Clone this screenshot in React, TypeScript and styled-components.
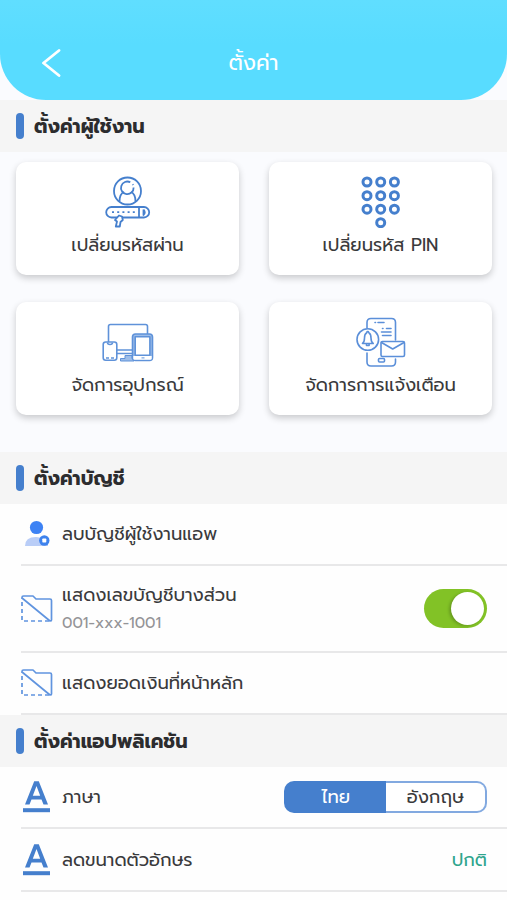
import React, { useState } from 'react';
import styled, { createGlobalStyle } from 'styled-components';

const BLUE = '#457fcd';

const GlobalStyle = createGlobalStyle`
  *, *::before, *::after { box-sizing: border-box; }
  html, body { margin: 0; padding: 0; background: #fff; }
  body { font-family: Prompt, "Noto Sans Thai", "Noto Sans", Inter, sans-serif; color: #333; }
  button { font: inherit; border: 0; margin: 0; padding: 0; background: none; color: inherit; cursor: pointer; }
  svg { display: block; flex: none; }
`;

const Screen = styled.main`
  width: 507px;
  height: 900px;
  overflow: hidden;
  background: #fefefe;
`;

const HeaderBackdrop = styled.div`
  background: #fafbfe;
`;

const Header = styled.header`
  display: grid;
  grid-template-columns: 104px 1fr 104px;
  align-items: center;
  height: 100px;
  padding-top: 26px;
  border-radius: 0 0 46px 46px;
  background: linear-gradient(#60deff, #58dcff 45%);
  color: #fff;
`;

const BackButton = styled.button`
  justify-self: start;
  padding-left: 40px;
`;

const Label = styled.span<{ $size?: number; $weight?: number; $color?: string }>`
  display: block;
  white-space: nowrap;
  line-height: 28px;
  font-size: ${(p) => p.$size ?? 18}px;
  font-weight: ${(p) => p.$weight ?? 400};
  color: ${(p) => p.$color ?? '#3a3a3c'};
`;

const Title = styled.h1`
  margin: 0;
  display: flex;
  justify-content: center;
`;

const SectionHead = styled.h2`
  display: flex;
  align-items: center;
  gap: 10px;
  height: 52px;
  margin: 0;
  padding-left: 16px;
  background: #f5f5f5;

  &::before {
    content: '';
    width: 8px;
    height: 26px;
    border-radius: 4px;
    background: ${BLUE};
  }

  ${Label} {
    padding-top: 1px;
  }
`;

const CardGrid = styled.div`
  display: grid;
  grid-template-columns: 223px 223px;
  grid-auto-rows: 113px;
  gap: 27px 30px;
  height: 300px;
  padding: 10px 16px 0;
  background: #fafbfe;
`;

const Card = styled.button`
  display: flex;
  flex-direction: column;
  align-items: center;
  padding-top: 12px;
  border-radius: 10px;
  background: #fff;
  box-shadow: 0 3px 7px rgba(0, 0, 0, 0.2);
`;

const CardIcon = styled.span`
  display: flex;
  height: 57px;
`;

const Row = styled.div<{ $height: number }>`
  display: flex;
  align-items: center;
  height: ${(p) => p.$height}px;
  margin-left: 21px;
  padding-right: 20px;
  border-bottom: 2px solid #e8e8e9;
`;

const RowIcon = styled.span`
  display: flex;
  width: 41px;
`;

const RowText = styled.div`
  flex: 1;
`;

const Toggle = styled.button<{ $on: boolean }>`
  display: flex;
  justify-content: ${(p) => (p.$on ? 'flex-end' : 'flex-start')};
  width: 63px;
  height: 39px;
  padding: 3px;
  border-radius: 20px;
  background: ${(p) => (p.$on ? '#82c226' : '#ccc')};

  &::after {
    content: '';
    width: 33px;
    height: 33px;
    border-radius: 50%;
    background: #fff;
    box-shadow: -2px 1px 3px rgba(0, 0, 0, 0.2);
  }
`;

const Segmented = styled.div`
  display: grid;
  grid-template-columns: 1fr 1fr;
  width: 203px;
  height: 32px;
`;

const Segment = styled.button<{ $active: boolean; $side: 'left' | 'right' }>`
  display: flex;
  align-items: center;
  justify-content: center;
  border: 2px solid ${(p) => (p.$active ? BLUE : '#82a9e0')};
  border-${(p) => (p.$side === 'left' ? 'right' : 'left')}-width: 0;
  border-radius: ${(p) => (p.$side === 'left' ? '10px 0 0 10px' : '0 10px 10px 0')};
  background: ${(p) => (p.$active ? BLUE : '#fff')};
`;

const BackIcon = () => (
  <svg width="22" height="28" viewBox="0 0 22 28" fill="none" stroke="#fff" strokeWidth="2.8" strokeLinecap="round" strokeLinejoin="round">
    <path d="M19 1.5 3.5 14 19 26.5" />
  </svg>
);

const PasswordIcon = () => (
  <svg width="46" height="54" viewBox="0 0 46 54" fill="none" stroke={BLUE} strokeWidth="1.8" strokeLinejoin="round">
    <circle cx="22.5" cy="17" r="13.5" />
    <path d="M25.3 8.3a6.3 6.3 0 1 0 3.3 5.2" />
    <path d="M27.7 10.3l.5.8" />
    <path d="M14.5 27.5c0-5 1.4-8.3 4.7-9.5m6.6 0c3.3 1.2 4.7 4.5 4.7 9.5" />
    <rect x="1.2" y="33" width="43" height="10.5" rx="5.25" />
    <path d="M34 33v10.5M38.5 35.5v5.5q2.5-2.7 0-5.5" />
    <path d="M7 38.2h23" strokeDasharray="2 3.2" />
    <path d="m14 41.5-4 4.5 2 1.5-1.2 5h4l.7-4.5 2.3-2-.8-3.5z" fill="#fff" />
  </svg>
);

const PinIcon = () => (
  <svg width="40" height="54" viewBox="0 0 40 54" fill="none" stroke={BLUE} strokeWidth="3">
    {[8, 21.7, 35.2].map((cy) => [6, 19.7, 33.4].map((cx) => <circle key={`${cx}-${cy}`} cx={cx} cy={cy} r="4" />))}
    <circle cx="19.7" cy="48.7" r="4" />
  </svg>
);

const DevicesIcon = () => (
  <svg width="52" height="54" viewBox="0 0 52 54" fill="none" stroke="#5f92d9" strokeWidth="1.6" strokeLinejoin="round">
    <path d="M6.5 28V12.5q0-2 2-2h35q2 0 2 2V20M15 36h15M15 39.5h15" />
    <path d="M23 41.5h7v3h2V47H18.5v-2.5H23z" fill="#9dbde9" strokeWidth="1" />
    <rect x="1.2" y="28" width="13.6" height="18.3" rx="2.5" />
    <path d="M5.5 28.5q0 2 2.5 2t2.5-2M4 44h3m2 0h3" />
    <rect x="30.5" y="20" width="20" height="26.4" rx="3" fill="#9dbde9" />
    <path d="M31.3 42h18.4v2.5q0 1.2-1.4 1.2H32.5q-1.2 0-1.2-1.2z" fill="#fff" stroke="none" />
    <rect x="33.2" y="22.8" width="14.7" height="18.5" fill="#fff" />
    <path d="M39.5 43.9h3" strokeWidth="1" />
  </svg>
);

const NotificationIcon = () => (
  <svg width="50" height="54" viewBox="0 0 50 54" fill="none" stroke="#5b8fd9" strokeWidth="1.6" strokeLinecap="round" strokeLinejoin="round">
    <path d="M11 14V8.5q0-4 4-4h20.5q4 0 4 4V26M11 39v9q0 4 4 4h20.5q4 0 4-4v-3" />
    <path d="M19 8.5h.5M22 8.5h6M26.5 14.5h.5m3.5 0h4.5M25.5 18h9.5M26.5 21.5h8.5" />
    <rect x="22.5" y="44.5" width="6" height="3.5" rx="1" />
    <circle cx="11.8" cy="25.5" r="10.8" fill="#fff" />
    <path d="M6.5 29.5q2-1.5 2-5.5 0-4 2-5l.8-1.5h1L13 19q2 1 2 5t2.2 5.5zM10.5 30v1.5h2.6V30" />
    <rect x="25" y="27.5" width="23.5" height="15" rx="1.5" fill="#fff" />
    <path d="m25.5 28.5 11.2 6.5 11.3-6.5" />
  </svg>
);

const RemoveUserIcon = () => (
  <svg width="32" height="28" viewBox="0 0 32 28">
    <circle cx="15.5" cy="7.5" r="6.6" fill="#3d82f4" />
    <path d="M4 26q0-9 11-9 8 0 12 6v3z" fill="#b9cdf7" />
    <circle cx="23.3" cy="20.5" r="5.2" fill="#3d82ed" />
    <rect x="21.3" y="18.5" width="4" height="4" rx=".7" fill="#fff" />
  </svg>
);

const HiddenFolderIcon = () => (
  <svg width="32" height="28" viewBox="0 0 32 28" fill="none" stroke="#6094df" strokeWidth="1.7" strokeLinejoin="round">
    <path d="M1 4V2.5Q1 1 2.5 1H12l3 3h14q1.5 0 1.5 1.5V25q0 1-1.5 1L1 3" />
    <path d="M1 7v19h27" strokeDasharray="4 3" />
  </svg>
);

const FontIcon = () => (
  <svg width="32" height="34" viewBox="0 0 32 34" fill={BLUE}>
    <path fillRule="evenodd" d="M13.2 1.2h4.6L27 24.4h-4.5l-2-5H10.5l-2 5H4zM15.500 6 11.800 15.700h7.400z" />
    <rect x="2" y="28.2" width="27" height="4" />
  </svg>
);

const cards = [
  { text: 'เปลี่ยนรหัสผ่าน', Icon: PasswordIcon },
  { text: 'เปลี่ยนรหัส PIN', Icon: PinIcon },
  { text: 'จัดการอุปกรณ์', Icon: DevicesIcon },
  { text: 'จัดการการแจ้งเตือน', Icon: NotificationIcon },
];

const SectionTitle = ({ children }: { children: string }) => (
  <SectionHead>
    <Label $size={19.3} $weight={700} $color="#2c2c2e">{children}</Label>
  </SectionHead>
);

export default function App() {
  const [masked, setMasked] = useState(true);
  const [language, setLanguage] = useState<'th' | 'en'>('th');

  return (
    <>
      <GlobalStyle />
      <Screen>
        <HeaderBackdrop>
          <Header>
            <BackButton aria-label="ย้อนกลับ"><BackIcon /></BackButton>
            <Title><Label $size={21.3} $color="#fff">ตั้งค่า</Label></Title>
          </Header>
        </HeaderBackdrop>

        <SectionTitle>ตั้งค่าผู้ใช้งาน</SectionTitle>
        <CardGrid>
          {cards.map(({ text, Icon }) => (
            <Card key={text}>
              <CardIcon><Icon /></CardIcon>
              <Label>{text}</Label>
            </Card>
          ))}
        </CardGrid>

        <SectionTitle>ตั้งค่าบัญชี</SectionTitle>
        <Row $height={62}>
          <RowIcon><RemoveUserIcon /></RowIcon>
          <RowText><Label>ลบบัญชีผู้ใช้งานแอพ</Label></RowText>
        </Row>
        <Row $height={87}>
          <RowIcon><HiddenFolderIcon /></RowIcon>
          <RowText>
            <Label>แสดงเลขบัญชีบางส่วน</Label>
            <Label $size={15.5} $color="#949497">001-xxx-1001</Label>
          </RowText>
          <Toggle $on={masked} aria-pressed={masked} onClick={() => setMasked(!masked)} />
        </Row>
        <Row $height={62}>
          <RowIcon><HiddenFolderIcon /></RowIcon>
          <RowText><Label>แสดงยอดเงินที่หน้าหลัก</Label></RowText>
        </Row>

        <SectionTitle>ตั้งค่าแอปพลิเคชัน</SectionTitle>
        <Row $height={62}>
          <RowIcon><FontIcon /></RowIcon>
          <RowText><Label>ภาษา</Label></RowText>
          <Segmented>
            <Segment $side="left" $active={language === 'th'} onClick={() => setLanguage('th')}>
              <Label $color={language === 'th' ? '#fff' : undefined}>ไทย</Label>
            </Segment>
            <Segment $side="right" $active={language === 'en'} onClick={() => setLanguage('en')}>
              <Label $color={language === 'en' ? '#fff' : undefined}>อังกฤษ</Label>
            </Segment>
          </Segmented>
        </Row>
        <Row $height={63}>
          <RowIcon><FontIcon /></RowIcon>
          <RowText><Label>ลดขนาดตัวอักษร</Label></RowText>
          <Label $color="#2fa58d">ปกติ</Label>
        </Row>
      </Screen>
    </>
  );
}
